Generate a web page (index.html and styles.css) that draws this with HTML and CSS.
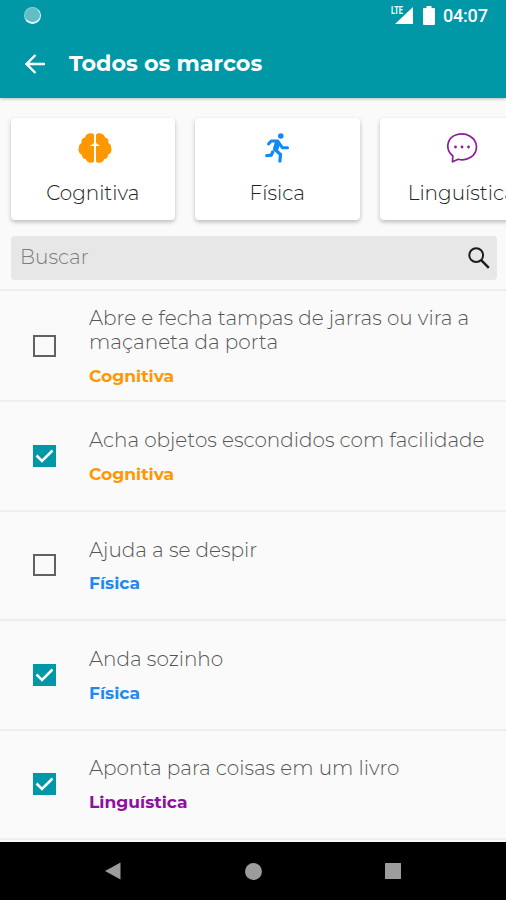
FILE: index.html
```html
<!DOCTYPE html>
<html lang="pt-BR">
<head>
<meta charset="utf-8">
<title>Todos os marcos</title>
<link rel="stylesheet" href="styles.css">
</head>
<body>
<div class="phone">
  <header class="header">
    <div class="status">
      <span class="spinner"></span>
      <span class="status-right">
        <svg width="24" height="20" viewBox="0 0 24 20"><path class="fill" d="M23 2v17H5z"/><path class="mask" d="M0 0h13.500v10H0z"/><text class="lte" x="1" y="9" textLength="12" lengthAdjust="spacingAndGlyphs">LTE</text></svg>
        <svg class="battery" width="12" height="19" viewBox="0 0 12 19"><path class="fill" d="M3.500 0h5v2H11a1 1 0 0 1 1 1v15a1 1 0 0 1-1 1H1a1 1 0 0 1-1-1V3a1 1 0 0 1 1-1h2.500z"/></svg>
        <span class="clock">04:07</span>
      </span>
    </div>
    <div class="bar">
      <svg class="back" width="20" height="20" viewBox="0 0 20 20"><path d="M20 10H2M10.500 1L1.500 10l9 9"/></svg>
      <h1 class="title">Todos os marcos</h1>
    </div>
  </header>
  <nav class="cards">
    <div class="card">
      <svg class="brain" width="34" height="30" viewBox="0 0 34 30"><path fill="#ff9800" d="M16 1.500V10l-4 3h4v15.500c-1 1.500-4 1.800-6 .5-1.500-1-2-2-2.200-3-2 .2-4-1.500-3.800-4.300C1 20.500-.2 17.500.9 14.500 1 11.500 2.500 10.300 3.700 10 3 7 4.500 5 7 4.500 7.500 2 9.500.5 12 .2c2 0 3.300.3 4 1.300zM18 1.500V10l4 3h-4v15.500c1 1.500 4 1.800 6 .5 1.500-1 2-2 2.200-3 2 .2 4-1.500 3.800-4.300 3-1.200 4.200-4.200 3.100-7.200-.1-3-1.600-4.200-2.800-4.500.7-3-.8-5-3.300-5.500C26.500 2 24.500.5 22 .2c-2 0-3.300.3-4 1.300z"/></svg>
      <span class="card-name">Cognitiva</span>
    </div>
    <div class="card">
      <svg width="24" height="30" viewBox="0 0 24 30"><circle cx="15.800" cy="3" r="2.800" fill="#1389f5"/><g fill="none" stroke="#1389f5" stroke-linejoin="round" stroke-linecap="round"><path stroke-width="3" d="M3.500 11l2.700-3h6.300l5 6.800h5"/><path stroke-width="5.500" d="M12.300 10.500L10.800 15.500"/><path stroke-width="3.200" d="M10.500 17l5 4.500-.6 6.700M7.700 19l-1.400 3.200-4.600.4"/></g></svg>
      <span class="card-name">Física</span>
    </div>
    <div class="card">
      <svg width="32" height="30" viewBox="0 0 32 30"><path fill="none" stroke="#8e1b9e" stroke-width="1.700" stroke-linejoin="round" d="M6.500 28.800l.3-5.800C-1 16.500.5 5 10.500 1.800 20-1.200 30.500 4.500 30.500 14c0 9-9.500 14.500-18.300 12.200z"/><g fill="#8e1b9e"><circle cx="9.500" cy="14" r="1.400"/><circle cx="16" cy="14" r="1.400"/><circle cx="22.500" cy="14" r="1.400"/></g></svg>
      <span class="card-name">Linguística</span>
    </div>
  </nav>
  <div class="search">
    <span class="placeholder">Buscar</span>
    <svg width="22" height="22" viewBox="0 0 22 22"><g fill="none" stroke="#1c1c1c" stroke-width="2"><circle cx="8.200" cy="8.200" r="6.900"/><path stroke-width="2.400" d="M13.200 13.200l7.600 7.600"/></g></svg>
  </div>
  <main class="list">
    <div class="row tall">
      <span class="box"></span>
      <div class="text"><p class="item">Abre e fecha tampas de jarras ou vira a<br>maçaneta da porta</p><p class="tag cog">Cognitiva</p></div>
    </div>
    <div class="row">
      <span class="box on"><svg width="23" height="22" viewBox="0 0 23 22"><path d="M3.500 10.500l5.500 5.500L19.500 5.500"/></svg></span>
      <div class="text"><p class="item">Acha objetos escondidos com facilidade</p><p class="tag cog">Cognitiva</p></div>
    </div>
    <div class="row">
      <span class="box"></span>
      <div class="text"><p class="item">Ajuda a se despir</p><p class="tag fis">Física</p></div>
    </div>
    <div class="row">
      <span class="box on"><svg width="23" height="22" viewBox="0 0 23 22"><path d="M3.500 10.500l5.500 5.500L19.500 5.500"/></svg></span>
      <div class="text"><p class="item">Anda sozinho</p><p class="tag fis">Física</p></div>
    </div>
    <div class="row">
      <span class="box on"><svg width="23" height="22" viewBox="0 0 23 22"><path d="M3.500 10.500l5.500 5.500L19.500 5.500"/></svg></span>
      <div class="text"><p class="item">Aponta para coisas em um livro</p><p class="tag lin">Linguística</p></div>
    </div>
  </main>
  <footer class="navbar">
    <svg width="16" height="18" viewBox="0 0 16 18"><path d="M15.500.5v17L0 9z"/></svg>
    <svg width="17" height="17" viewBox="0 0 17 17"><circle cx="8.500" cy="8.500" r="8.500"/></svg>
    <svg width="16" height="16" viewBox="0 0 16 16"><rect width="16" height="16" rx=".5"/></svg>
  </footer>
</div>
</body>
</html>
```

FILE: styles.css
```css
* { box-sizing: border-box; }
body { margin: 0; font-family: Montserrat, Inter, "Open Sans", sans-serif; background: #fafafa; }
p, h1 { margin: 0; }
svg { display: block; flex: none; }

.phone { display: flex; flex-direction: column; width: 506px; height: 900px; overflow: hidden; }

.header { height: 98px; flex: none; background: #0097a7; color: #fff; box-shadow: 0 1px 3px rgba(0,0,0,.25); }
.status { display: flex; justify-content: space-between; align-items: center; height: 32px; padding: 0 18px 0 24px; }
.spinner { width: 17px; height: 17px; margin-top: -2px; border-radius: 50%; background: #62bdc8; border: 1px solid #8bd0d8; border-right-color: #e4fafa; border-bottom: 2px solid #e4fafa; }
.status-right { display: flex; align-items: center; }
.status-right svg:first-child { margin-top: -2px; }
.fill { fill: #fff; }
.mask { fill: #0097a7; }
.lte { font: 700 10px Roboto, sans-serif; fill: #fff; }
.battery { margin: -2px 0 0 9px; }
.clock { width: 45px; margin-left: 8px; font: 500 18px/32px Roboto, sans-serif; letter-spacing: -.2px; }
.bar { display: flex; align-items: center; gap: 24px; height: 64px; padding-left: 25px; }
.back path { fill: none; stroke: #fff; stroke-width: 2.4; }
.title { font-size: 22.2px; line-height: 28px; font-weight: 700; }

.cards { display: flex; flex: none; gap: 20px; padding: 20px 0 0 10.5px; height: 138px; }
.card { display: flex; flex: none; flex-direction: column; align-items: center; width: 164.5px; height: 102px; padding-top: 15px; border-radius: 4px; background: #fff; box-shadow: 0 2px 4px rgba(0,0,0,.26); }
.card-name { margin-top: 16px; font-size: 20px; line-height: 28px; font-weight: 300; color: #222; white-space: nowrap; }
.brain { margin-left: 4px; }

.search { display: flex; flex: none; justify-content: space-between; align-items: center; width: 486px; height: 44px; margin-left: 11px; padding: 0 7px 0 9px; border-radius: 4px; background: #e7e7e7; }
.placeholder { margin-top: -3px; font-size: 20px; font-weight: 300; color: #7c7c7c; }

.list { flex: 1; margin-top: 9px; }
.row { display: flex; align-items: center; height: 109.500px; padding-left: 33px; border-top: 2px solid #eeeeee; }
.row.tall { height: 111px; }
.row:last-child { height: 111px; border-bottom: 2px solid #eeeeee; }
.box { flex: none; width: 23px; height: 22px; border: 2px solid #616161; }
.on { border: 0; background: #0097a7; }
.on path { fill: none; stroke: #fff; stroke-width: 2.6; }
.text { margin-left: 33px; padding-top: 2px; }
.item { font-size: 20px; line-height: 24.500px; font-weight: 300; color: #555; white-space: nowrap; }
.tag { margin-top: 9px; font-size: 17.1px; line-height: 24px; font-weight: 700; }
.cog { color: #ff9800; }
.fis { color: #2189f0; }
.lin { color: #8e0fa0; }

.navbar { display: flex; flex: none; align-items: center; justify-content: space-between; height: 58px; padding: 0 105px 0 105px; background: #000; }
.navbar svg { fill: #9c9c9c; }
```
